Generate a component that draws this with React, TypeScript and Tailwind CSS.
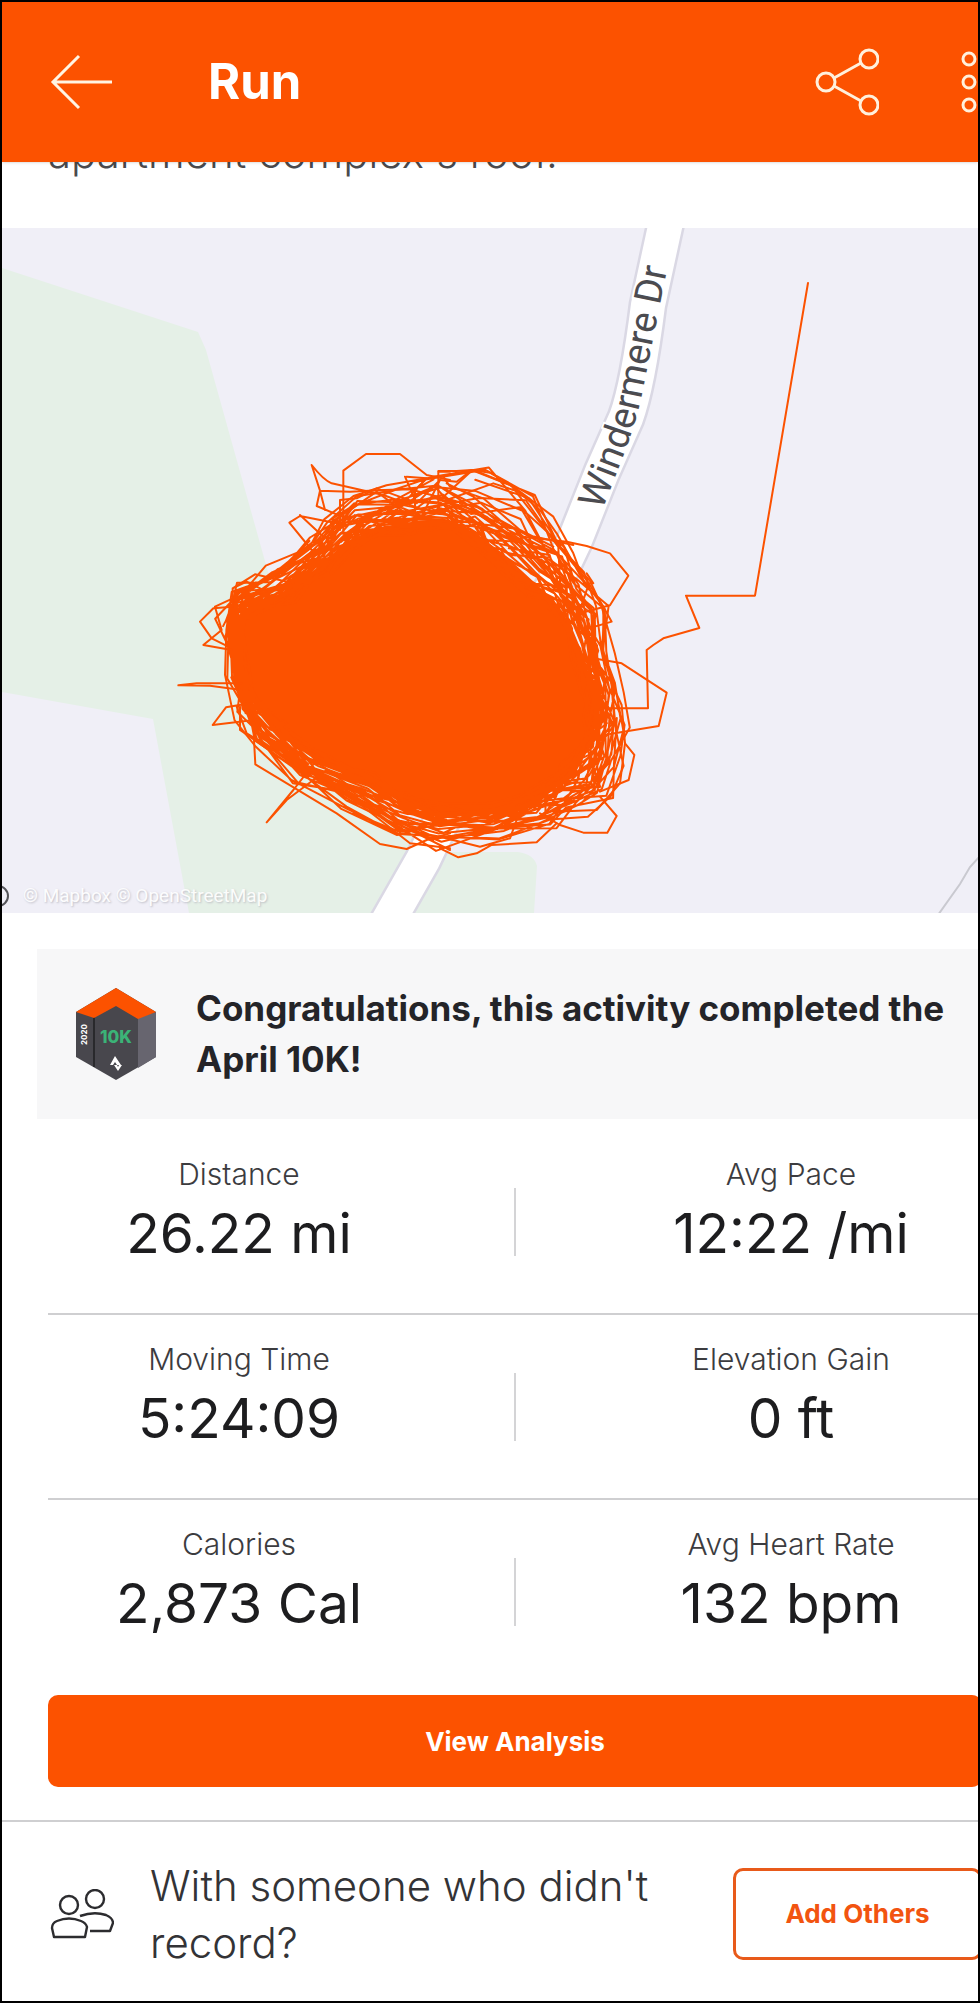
import React from "react";

type Point = [number, number];

// Edge of the solid part of the route and the outer limit of the stray laps.
const CORE: Point[] = [
  [245, 683], [238, 645], [244, 614], [287, 592], [322, 567], [346, 544], [372, 532],
  [404, 525], [443, 520], [473, 534], [503, 556], [532, 583], [553, 602], [569, 626],
  [581, 655], [591, 687], [595, 720], [589, 745], [572, 772], [550, 790], [527, 804],
  [488, 813], [440, 814], [408, 804], [367, 781], [317, 758], [279, 731], [256, 704],
];
const OUTER: Point[] = [
  [232, 672], [222, 622], [230, 588], [272, 570], [307, 542], [328, 515], [350, 494],
  [388, 488], [430, 475], [482, 474], [530, 498], [568, 532], [590, 575], [605, 608],
  [608, 650], [617, 690], [625, 725], [624, 768], [614, 800], [590, 812], [556, 830],
  [500, 841], [440, 845], [395, 836], [345, 810], [295, 780], [252, 747], [238, 716],
];

function createRandom(seed: number) {
  let state = seed;
  return () => {
    state = (state * 1664525 + 1013904223) % 4294967296;
    return state / 4294967296;
  };
}

function buildLaps(count: number): string {
  const random = createRandom(2020);
  const parts: string[] = [];
  for (let lap = 0; lap < count; lap++) {
    const bias = (lap / count) ** 1.6 * 0.95 - 0.05;
    let t = bias;
    const start = Math.floor(random() * CORE.length);
    for (let i = 0; i < CORE.length; i++) {
      const k = (start + i) % CORE.length;
      t = Math.min(1, Math.max(-0.2, bias + (t - bias) * 0.5 + (random() - 0.5) * 0.6));
      const x = CORE[k][0] + (OUTER[k][0] - CORE[k][0]) * t + (random() - 0.5) * 14;
      const y = CORE[k][1] + (OUTER[k][1] - CORE[k][1]) * t + (random() - 0.5) * 14;
      parts.push(`${i === 0 ? "M" : "L"}${x.toFixed(1)} ${y.toFixed(1)}`);
    }
  }
  return parts.join("");
}

const LAPS = buildLaps(36);
const ROAD = "M666 222 L648 305 Q638 385 626 418 L602 472 L575 540 L423 860 L370 953";

function RouteMap() {
  return (
    <svg
      className="block h-[685px] w-full"
      viewBox="2 228 976 685"
      preserveAspectRatio="xMidYMid slice"
      role="img"
      aria-label="Route map"
    >
      <rect x="-500" y="228" width="2000" height="685" fill="#f0eff7" />
      <path d="M-500 268H2L198 332L206 350L268 572L380 800L420 840L450 852H518Q534 854 537 866L534 913H189L153 719L2 692H-500Z" fill="#e5f0e7" />
      <path d="M938 915L960 884L970 867L980 856" fill="none" stroke="#c9c9d0" strokeWidth="2" />
      <path d={ROAD} fill="none" stroke="#dad8e4" strokeWidth="39" />
      <path d={ROAD} fill="none" stroke="#ffffff" strokeWidth="34" />
      <path id="street" d="M602 511L626 449Q637 419 642 394L673 240" fill="none" />
      <text fontSize="38" fill="#4b4b50" stroke="#ffffff" strokeWidth="4" paintOrder="stroke" className="font-['Roboto',sans-serif]">
        <textPath href="#street">Windermere Dr</textPath>
      </text>
      <g fill="none" stroke="#fc5200" strokeLinejoin="round" strokeLinecap="round">
        <polygon points={CORE.map((p) => p.join(",")).join(" ")} fill="#fc5200" strokeWidth="4" />
        <path d={LAPS} strokeWidth="2" />
        <g transform="translate(150 420) scale(0.33333)" strokeWidth="6">
          <path d="M580 340V152L648 102H750L830 165L900 180" />
          <path d="M600 300L500 258L510 212L485 135Q520 180 545 190L700 225L820 270M510 212L525 270M510 212L600 215L700 210L780 208L900 240" />
          <path d="M570 330V240L620 235L680 205L790 245L860 250M600 270L680 215L760 275" />
          <path d="M530 390H485L418 308L450 288L560 310M450 285L520 350L560 300" />
          <path d="M485 395L440 430L400 450L330 520L250 545M460 420L380 500" />
          <path d="M430 490L315 463L248 505V560M248 560L190 565L150 605L185 655L235 680M245 690L160 675L215 630L195 560L260 530L350 515L290 485L248 505" />
          <path d="M275 790H140L85 796L180 797L275 810" />
          <path d="M330 898L188 915L228 862L300 850" />
          <path d="M330 900L312 960L316 1033L560 1180L690 1272L770 1287L830 1260L900 1240" />
          <path d="M500 1020L430 1110L350 1207L410 1140L530 1050" />
          <path d="M270 860V930L400 1020L600 1110L760 1220L900 1290M260 860L290 940L470 1050L640 1160L780 1270L900 1285M300 870L330 930L520 1040L720 1190L850 1260" />
          <path d="M770 170L830 175L795 210V280M765 170L800 250L870 180L820 280M865 155H900M865 155V280" />
        </g>
        <g transform="translate(440 420) scale(0.33333)" strokeWidth="6">
          <path d="M-5 153H50L95 150L150 158L220 200L340 290L400 400L430 480L490 560L490 700" />
          <path d="M0 180L50 185L95 150L210 195L300 270L350 340L440 500M220 205L340 360L440 480M20 240L160 190L220 210" />
          <path d="M0 240L95 152M10 170L30 200L130 235L240 330L340 380M20 190L100 230L180 300L260 345L400 375" />
          <path d="M0 250L140 290L240 370L330 470L420 560M30 280L160 330L270 440L380 560L440 640M60 250L190 330L300 400L380 480L430 580" />
          <path d="M250 350L380 365L440 378L510 400L565 467L510 556L420 580" />
          <path d="M440 480L490 560L515 605L430 630M430 490H460L440 460" />
          <path d="M460 715L545 730L680 818L656 918L510 942" />
          <path d="M480 865H624L620 690L640 675L670 655L778 624L738 527H945L1104 -411" />
          <path d="M500 720L515 790L545 855L555 970L583 1005L566 1080L480 1115" />
          <path d="M480 1130L530 1188L502 1238H430L360 1215L300 1180M555 970L540 1090L470 1170L340 1175" />
          <path d="M0 1285L55 1312L110 1300L155 1275L290 1267L350 1210M0 1250L120 1280L210 1255L230 1200" />
        </g>
      </g>
      <circle cx="-2" cy="896" r="10" fill="none" stroke="#55555a" strokeWidth="2" />
      <text x="23" y="902" fontSize="19" fill="#ffffff" opacity="0.85" className="font-['Roboto',sans-serif] [text-shadow:1px_1px_2px_#b8b8c0]">
        © Mapbox © OpenStreetMap
      </text>
    </svg>
  );
}

function Badge() {
  return (
    <svg className="h-[92px] w-20 shrink-0" viewBox="0 0 80 92" aria-label="2020 10K badge" role="img">
      <path d="M0 24L40 0L80 24V69L40 92L0 69Z" fill="#48474d" />
      <path d="M62 30L80 24V69L62 80Z" fill="#67656f" />
      <path d="M18 29V79" stroke="#1f1f22" strokeWidth="1.5" />
      <path d="M40 0L80 24L62 31L40 18L18 30L0 24Z" fill="#fc5200" />
      <text x="40" y="55" textAnchor="middle" fontSize="17" fontWeight="800" fill="#3bb377" className="font-['Inter',sans-serif]">10K</text>
      <text transform="translate(11 57) rotate(-90)" fontSize="8" fontWeight="700" fill="#ffffff" className="font-['Inter',sans-serif]">2020</text>
      <path d="M39 68L34 77H37L39 74L41 77H45Z M38 77H41L42 79L43 77H46L42 83Z" fill="#ffffff" />
    </svg>
  );
}

const STATS = [
  [["Distance", "26.22 mi"], ["Avg Pace", "12:22 /mi"]],
  [["Moving Time", "5:24:09"], ["Elevation Gain", "0 ft"]],
  [["Calories", "2,873 Cal"], ["Avg Heart Rate", "132 bpm"]],
];

function Stat({ label, value }: { label: string; value: string }) {
  return (
    <div className="text-center whitespace-nowrap">
      <dt className="text-[30px] leading-9 font-light text-[#3c3c3f]">{label}</dt>
      <dd className="mt-2 text-[55px] leading-[66px] font-normal text-[#1d1d1f]">{value}</dd>
    </div>
  );
}

export default function App() {
  return (
    <main className="flex min-h-screen flex-col overflow-hidden border-2 border-black bg-white font-['Inter',sans-serif] text-[#242428]">
      <header className="relative z-10 flex h-40 items-center bg-[#fc5200] pr-px pl-12 text-white shadow">
        <button type="button" aria-label="Back">
          <svg className="h-14 w-16" viewBox="0 0 64 56" fill="none" stroke="#fff5e4" strokeWidth="3">
            <path d="M62 28H3M29 2L3 28L29 54" />
          </svg>
        </button>
        <h1 className="ml-[94px] flex-1 text-[49px] leading-[60px] font-bold">Run</h1>
        <button type="button" aria-label="Share" className="mr-[82px]">
          <svg className="h-[68px] w-16" viewBox="0 0 64 68" fill="none" stroke="#fff0dc" strokeWidth="3">
            <circle cx="11" cy="34" r="9" />
            <circle cx="54" cy="11" r="9" />
            <circle cx="54" cy="57" r="9" />
            <path d="M19 30L46 15M19 38L46 53" />
          </svg>
        </button>
        <button type="button" aria-label="More options">
          <svg className="h-16 w-4" viewBox="0 0 16 64" fill="none" stroke="#fff0dc" strokeWidth="3">
            <circle cx="8" cy="9" r="6" />
            <circle cx="8" cy="32" r="6" />
            <circle cx="8" cy="55" r="6" />
          </svg>
        </button>
      </header>

      <p className="-mt-10 pb-11 pl-[46px] text-[42px] leading-[62px] font-light text-[#4a4a4d]">apartment complex's roof.</p>

      <RouteMap />

      <section className="mt-9 ml-[35px] flex items-center gap-10 bg-[#f7f7f8] py-[34px] pl-[39px]">
        <Badge />
        <p className="text-[35px] leading-[51px] font-bold whitespace-nowrap">
          Congratulations, this activity completed the
          <br />
          April 10K!
        </p>
      </section>

      <dl className="mt-[11px] -mr-1 ml-[46px]">
        {STATS.map(([left, right]) => (
          <div
            key={left[0]}
            className="grid h-[185px] grid-cols-[1fr_170px_1fr] items-start border-b-2 border-[#cfcfd1] pt-[26px] last:border-b-0"
          >
            <Stat label={left[0]} value={left[1]} />
            <div className="mt-8 h-[68px] w-0.5 justify-self-center bg-[#d4d4d6]" />
            <Stat label={right[0]} value={right[1]} />
          </div>
        ))}
      </dl>

      <button type="button" className="mt-[10px] -mr-1 ml-[46px] h-[92px] rounded-[10px] bg-[#fc5200] text-[26px] font-bold text-white">
        View Analysis
      </button>

      <section className="mt-[33px] flex flex-1 items-center border-t-2 border-[#cfcfd1] pt-1 pl-12">
        <svg className="h-[50px] w-16 shrink-0" viewBox="0 0 64 50" fill="none" stroke="#2c2c2f" strokeWidth="2.4" strokeLinejoin="round" aria-hidden="true">
          <circle cx="19" cy="16" r="9" />
          <circle cx="45" cy="10" r="9" />
          <path d="M4 48L2 39Q2 34 7 32Q19 27 31 32Q36 34 37 38L35 48Z" />
          <path d="M30 27Q44 22 56 26Q63 29 63 34L60 42H40" />
        </svg>
        <p className="ml-9 flex-1 text-[42px] leading-[57px] font-light text-[#333336]">
          With someone who didn't
          <br />
          record?
        </p>
        <button type="button" className="-mr-1 h-[92px] w-[249px] rounded-[10px] border-3 border-[#e85a1a] text-[26px] font-bold text-[#f25410]">
          Add Others
        </button>
      </section>
    </main>
  );
}
